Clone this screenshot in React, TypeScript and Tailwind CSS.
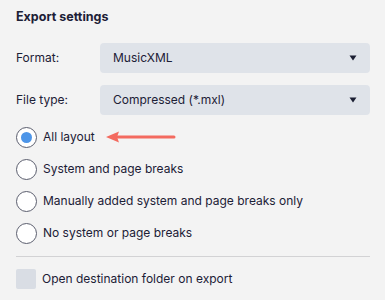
import { ReactNode } from "react";

function Select({ value }: { value: string }) {
  return (
    <div className="flex h-[30px] flex-1 items-center justify-between rounded-[4px] bg-[#dfe3e9] pl-[13px] pr-[13px]">
      <span>{value}</span>
      <svg width="8" height="6" viewBox="0 0 8 6">
        <path d="M0.5 0.5 L7.5 0.5 L4 5.5 Z" fill="#1b1f33" />
      </svg>
    </div>
  );
}

function FieldRow({ label, children }: { label: string; children: ReactNode }) {
  return (
    <div className="flex items-center">
      <div className="w-[84px]">{label}</div>
      {children}
    </div>
  );
}

function Radio({ label, checked, extra }: { label: string; checked?: boolean; extra?: ReactNode }) {
  return (
    <div className="flex h-[32px] items-center">
      <div className="flex h-[21px] w-[21px] items-center justify-center rounded-full border-[1.5px] border-[#5b5e6e] bg-white">
        {checked && <div className="h-[11px] w-[11px] rounded-full bg-[#4d95e8]" />}
      </div>
      <span className="ml-[6px]">{label}</span>
      {extra}
    </div>
  );
}

function Arrow() {
  return (
    <svg width="72" height="14" viewBox="0 0 72 14" className="ml-[10px]">
      <line x1="8" y1="7" x2="69" y2="7" stroke="#f36a5f" strokeWidth="3" strokeLinecap="round" />
      <path d="M1 7 L14 1.5 L12 7 L14 12.5 Z" fill="#f36a5f" />
    </svg>
  );
}

export default function App() {
  return (
    <div
      className="h-[300px] w-[385px] bg-[#f3f3f3] pl-[16px] pr-[15px] pt-[7px] text-[12px] text-[#1c2036]"
      style={{ fontFamily: "Inter, 'Liberation Sans', sans-serif" }}
    >
      <div className="text-[12.5px] font-bold leading-[20px]">Export settings</div>
      <div className="mt-[16px] flex flex-col gap-[12px]">
        <FieldRow label="Format:">
          <Select value="MusicXML" />
        </FieldRow>
        <FieldRow label="File type:">
          <Select value="Compressed (*.mxl)" />
        </FieldRow>
      </div>
      <div className="mt-[6px] flex flex-col">
        <Radio label="All layout" checked extra={<Arrow />} />
        <Radio label="System and page breaks" />
        <Radio label="Manually added system and page breaks only" />
        <Radio label="No system or page breaks" />
      </div>
      <div className="mt-[7px] h-px bg-[#d2d2d4]" />
      <div className="mt-[12px] flex items-center">
        <div className="h-[20px] w-[20px] rounded-[2px] bg-[#d9dde4]" />
        <span className="ml-[6px]">Open destination folder on export</span>
      </div>
    </div>
  );
}
